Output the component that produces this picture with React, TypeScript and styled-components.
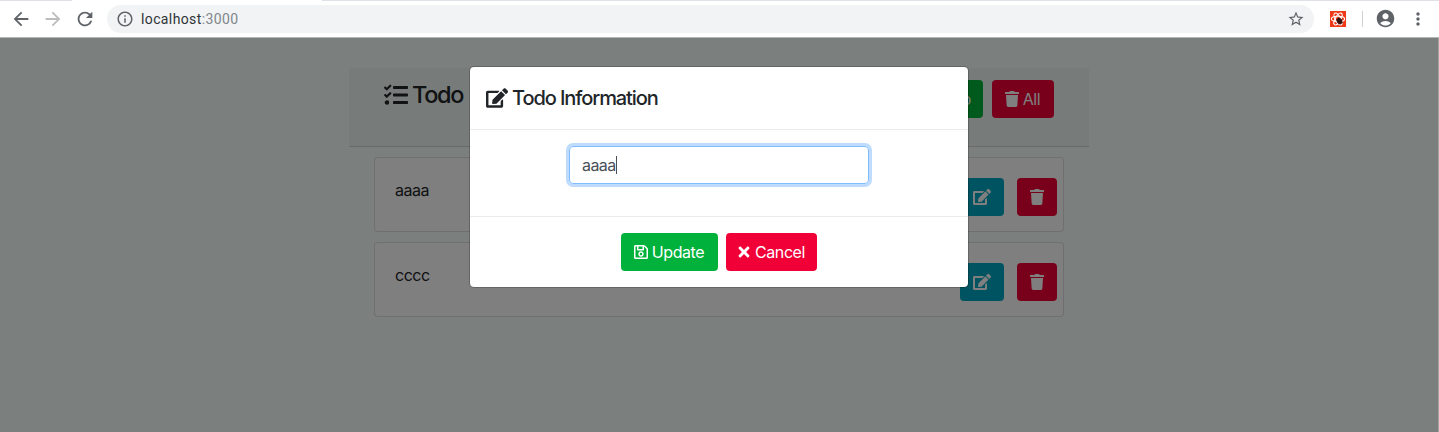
import React from "react";
import styled, { createGlobalStyle } from "styled-components";
import { FaTasks, FaEdit, FaRegSave, FaTimes, FaTrash } from "react-icons/fa";
import {
  MdArrowBack,
  MdArrowForward,
  MdRefresh,
  MdInfoOutline,
  MdStarBorder,
  MdAccountCircle,
  MdMoreVert,
} from "react-icons/md";

const GlobalStyle = createGlobalStyle`
  *, *::before, *::after { box-sizing: border-box; }
  body {
    margin: 0;
    overflow: hidden;
    font-family: Inter, "Liberation Sans", sans-serif;
    font-size: 16px;
    line-height: 1.5;
    color: #212529;
  }
  svg { display: block; flex: none; }
`;

const Window = styled.div`
  display: flex;
  flex-direction: column;
  height: 432px;
  background: #a2a4a3;
`;

const TabStrip = styled.div`
  height: 1px;
  background: #dee1e6;
`;

const ActiveTab = styled.div`
  width: 250px;
  height: 1px;
  margin-left: 72px;
  background: #fff;
`;

const BrowserBar = styled.div`
  display: flex;
  align-items: center;
  height: 37px;
  padding: 0 11px 1px 10px;
  background: #fff;
  border-bottom: 1px solid #b4b5b6;
  color: #5f6368;
`;

const NavButton = styled.span<{ $muted?: boolean }>`
  display: flex;
  justify-content: center;
  width: 22px;
  margin-right: 10px;
  color: ${(p) => (p.$muted ? "#bbbcbe" : "#5f6368")};
`;

const AddressBar = styled.div`
  display: flex;
  align-items: center;
  flex: 1;
  height: 28px;
  margin-left: 1px;
  padding: 0 9px;
  border-radius: 14px;
  background: #f1f3f4;
`;

const Url = styled.span`
  flex: 1;
  margin-left: 7px;
  font: 14px/20px Roboto, sans-serif;
  letter-spacing: 0.38px;
  color: #80868b;
`;

const Host = styled.span`
  color: #303338;
`;

const Extension = styled.span`
  margin-left: 16px;
`;

const Divider = styled.span`
  width: 1px;
  height: 16px;
  margin: 0 12px 0 16px;
  background: #d0d1d3;
`;

const Menu = styled.span`
  margin-left: 12px;
`;

const Page = styled.div`
  position: relative;
  flex: 1;
  margin-right: 1px;
  padding-top: 30px;
  background: #f7fefa;
`;

const TodoPanel = styled.div`
  width: 740px;
  margin: 0 auto;
`;

const PanelHeader = styled.div`
  display: flex;
  justify-content: space-between;
  height: 79px;
  padding: 12px 35px;
  background: rgba(0, 0, 0, 0.03);
  border-bottom: 1px solid rgba(0, 0, 0, 0.125);
`;

const PanelTitle = styled.h3`
  display: flex;
  align-items: center;
  gap: 4px;
  height: 29px;
  margin: 0;
  font-size: 23.5px;
  font-weight: 500;
  letter-spacing: -1.3px;
`;

const HeaderActions = styled.div`
  display: flex;
  gap: 9px;
`;

const tones = { success: "#00b23b", danger: "#f00036", info: "#00a7c0" };

const Button = styled.button<{ $tone: keyof typeof tones; $width?: number }>`
  display: flex;
  align-items: center;
  justify-content: center;
  gap: 3px;
  height: 38px;
  width: ${(p) => (p.$width ? `${p.$width}px` : "auto")};
  padding: 0 12px;
  border: 0;
  border-radius: 4px;
  background: ${(p) => tones[p.$tone]};
  color: #fff;
  font: inherit;
  letter-spacing: -0.42px;
  white-space: nowrap;
`;

const ButtonLabel = styled.span`
  margin-right: 2px;
`;

const TodoList = styled.div`
  display: flex;
  flex-direction: column;
  gap: 10px;
  padding: 10px 25px;
`;

const TodoItem = styled.div`
  display: flex;
  justify-content: space-between;
  height: 75px;
  padding: 20px 6px 0 20px;
  border: 1px solid rgba(0, 0, 0, 0.125);
  border-radius: 4px;
  background: #fff;
`;

const TodoText = styled.span`
  line-height: 25px;
  letter-spacing: -0.5px;
`;

const ItemActions = styled.div`
  display: flex;
  gap: 13px;
`;

const Backdrop = styled.div`
  position: absolute;
  inset: 0;
  display: flex;
  justify-content: center;
  align-items: flex-start;
  padding-top: 28px;
  background: rgba(0, 0, 0, 0.5);
`;

const Modal = styled.div`
  width: 500px;
  border: 1px solid rgba(0, 0, 0, 0.2);
  border-radius: 5px;
  background: #fff;
  background-clip: padding-box;
`;

const ModalHeader = styled.div`
  display: flex;
  align-items: center;
  gap: 4px;
  height: 63px;
  padding: 0 16px;
  border-bottom: 1px solid #e9ecef;
`;

const ModalTitle = styled.h4`
  margin: 0;
  font-size: 20px;
  line-height: 30px;
  font-weight: 500;
  letter-spacing: -1.08px;
`;

const ModalBody = styled.div`
  display: flex;
  justify-content: center;
  padding: 16px 16px 32px;
`;

const Field = styled.div`
  display: flex;
  align-items: center;
  width: 300px;
  height: 38px;
  padding: 0 12px;
  border: 1px solid #80bdff;
  border-radius: 4px;
  box-shadow: 0 0 0 3px #bfdcff;
  color: #495057;
  letter-spacing: -0.55px;
`;

const Caret = styled.span`
  width: 1px;
  height: 18px;
  background: #495057;
`;

const ModalFooter = styled.div`
  display: flex;
  justify-content: center;
  gap: 8px;
  padding: 16px;
  border-top: 1px solid #e9ecef;
`;

const ExtensionIcon = () => (
  <svg width="16" height="16" viewBox="0 0 16 16">
    <rect width="16" height="16" fill="#f03a17" />
    <g fill="none" stroke="#fff" strokeWidth="1.1">
      <ellipse cx="8" cy="8" rx="6.6" ry="2.7" />
      <ellipse cx="8" cy="8" rx="6.6" ry="2.7" transform="rotate(60 8 8)" />
      <ellipse cx="8" cy="8" rx="6.6" ry="2.7" transform="rotate(120 8 8)" />
    </g>
    <g stroke="#32120c" strokeWidth="1" fill="#32120c">
      <ellipse cx="9.5" cy="10" rx="2" ry="2.8" transform="rotate(-25 9.5 10)" />
      <path d="M6 8.5l7 3.5M7 12l5.5-4M9 6.5v7M6.5 10h6" fill="none" strokeWidth="0.8" />
    </g>
  </svg>
);

const todos = ["aaaa", "cccc"];

export default function App() {
  return (
    <Window>
      <GlobalStyle />
      <TabStrip>
        <ActiveTab />
      </TabStrip>
      <BrowserBar>
        <NavButton><MdArrowBack size={22} /></NavButton>
        <NavButton $muted><MdArrowForward size={22} /></NavButton>
        <NavButton><MdRefresh size={22} /></NavButton>
        <AddressBar>
          <MdInfoOutline size={18} />
          <Url><Host>localhost</Host>:3000</Url>
          <MdStarBorder size={18} />
        </AddressBar>
        <Extension><ExtensionIcon /></Extension>
        <Divider />
        <MdAccountCircle size={21} />
        <Menu><MdMoreVert size={20} /></Menu>
      </BrowserBar>
      <Page>
        <TodoPanel>
          <PanelHeader>
            <PanelTitle><FaTasks size={24} />Todo</PanelTitle>
            <HeaderActions>
              <Button $tone="success">Todo</Button>
              <Button $tone="danger" $width={62}><FaTrash size={16} /><ButtonLabel>All</ButtonLabel></Button>
            </HeaderActions>
          </PanelHeader>
          <TodoList>
            {todos.map((text) => (
              <TodoItem key={text}>
                <TodoText>{text}</TodoText>
                <ItemActions>
                  <Button $tone="info" $width={44}><FaEdit size={18} /></Button>
                  <Button $tone="danger" $width={40}><FaTrash size={16} /></Button>
                </ItemActions>
              </TodoItem>
            ))}
          </TodoList>
        </TodoPanel>
        <Backdrop>
          <Modal>
            <ModalHeader>
              <FaEdit size={22} />
              <ModalTitle>Todo Information</ModalTitle>
            </ModalHeader>
            <ModalBody>
              <Field>aaaa<Caret /></Field>
            </ModalBody>
            <ModalFooter>
              <Button $tone="success" $width={97}><FaRegSave size={16} /><ButtonLabel>Update</ButtonLabel></Button>
              <Button $tone="danger" $width={91}><FaTimes size={16} /><ButtonLabel>Cancel</ButtonLabel></Button>
            </ModalFooter>
          </Modal>
        </Backdrop>
      </Page>
    </Window>
  );
}
